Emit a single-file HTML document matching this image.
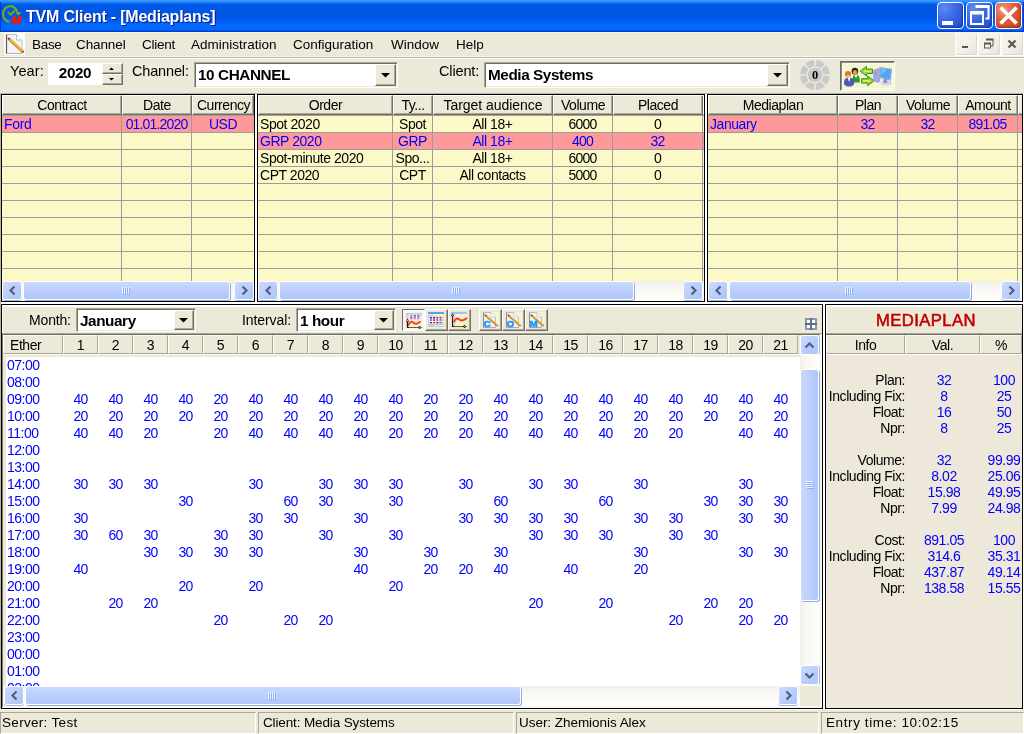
<!DOCTYPE html><html><head><meta charset="utf-8"><title>TVM Client - [Mediaplans]</title><style>
html,body{margin:0;padding:0;}
body{width:1024px;height:734px;overflow:hidden;background:#ECE9D8;font-family:"Liberation Sans",sans-serif;font-size:14px;letter-spacing:-0.45px;color:#000;position:relative;}
div,svg{position:absolute;box-sizing:border-box;}
svg{overflow:visible;}
.t{white-space:nowrap;overflow:hidden;}
.c{text-align:center;}
.r{text-align:right;}
.b{font-weight:bold;}
.bl{color:#0000FF;}
.n{letter-spacing:-0.8px;}
.hd{background:#ECE9D8;border-top:1px solid #fff;border-left:1px solid #fff;border-right:1px solid #716F64;border-bottom:1px solid #716F64;box-shadow:inset -1px -1px 0 #ACA899;text-align:center;white-space:nowrap;overflow:hidden;font-size:14px;}
.hf{background:#ECE9D8;border-top:1px solid #F8F7F1;border-left:1px solid #fff;border-right:1px solid #ACA899;border-bottom:1px solid #ACA899;text-align:center;white-space:nowrap;overflow:hidden;font-size:14px;}
.sunk{border-top:1px solid #ACA899;border-left:1px solid #ACA899;border-right:1px solid #fff;border-bottom:1px solid #fff;}
.sunk2{border:1px solid;border-color:#ACA899 #fff #fff #ACA899;box-shadow:inset 1px 1px 0 #716F64, inset -1px -1px 0 #ECE9D8;background:#fff;}
.btn{background:#ECE9D8;border:1px solid;border-color:#fff #716F64 #716F64 #fff;box-shadow:inset -1px -1px 0 #ACA899;}
.sbtn{border:1px solid #fff;border-radius:3px;background:linear-gradient(135deg,#CBDBFD 0%,#BACDFB 55%,#AEC4F8 100%);box-shadow:0 1px 0 #9DB5EA;}
.sbtnv{border:1px solid #fff;border-radius:3px;background:linear-gradient(135deg,#CBDBFD 0%,#BACDFB 55%,#AEC4F8 100%);box-shadow:1px 0 0 #9DB5EA;}
.sthumbh{border:1px solid #fff;border-radius:3px;background:linear-gradient(to bottom,#C9D9FD 0%,#BCCFFB 50%,#B1C6F9 100%);box-shadow:1px 1px 0 #8FAAE6;}
.sthumbv{border:1px solid #fff;border-radius:3px;background:linear-gradient(to right,#C9D9FD 0%,#BCCFFB 50%,#B1C6F9 100%);box-shadow:1px 1px 0 #8FAAE6;}
.strackh{background:linear-gradient(to bottom,#F1EFE8 0%,#F8F7F3 30%,#FEFEFB 100%);}
.strackv{background:linear-gradient(to right,#F1EFE8 0%,#F8F7F3 30%,#FEFEFB 100%);}
.cap{border:1px solid #fff;border-radius:4px;}
</style></head><body><div id="root" style="left:0;top:0;width:1024px;height:734px;will-change:transform;">
<div style="left:0px;top:0px;width:1024px;height:32px;background:linear-gradient(to bottom,#3D95FF 0px,#3D95FF 1px,#2B8AFF 2px,#0470FF 3px,#0262EE 4px,#0058E6 5px,#0055E5 17px,#005AF0 19px,#0062FA 23px,#0368FC 24px,#0368FC 30px,#0450E8 30px,#0450E8 31px,#003DD7 31px,#003DD7 32px);"></div>
<div style="left:0px;top:2px;width:1px;height:30px;background:#0A34CC;"></div>
<div style="left:1023px;top:2px;width:1px;height:30px;background:#0A34CC;"></div>
<svg style="left:1px;top:3px" width="24" height="24" viewBox="0 0 24 24"><path d="M16.400 10.300A7.200 7.900 0 1 0 8.300 18.800" fill="none" stroke="#6BA91E" stroke-width="2.200"/>
<path d="M14.400 9.300h6.200l-3.100 3.400z" fill="#6BA91E"/>
<path d="M7.100 8.800l2.600 3 4.100-4.300" fill="none" stroke="#6BA91E" stroke-width="2"/>
<text x="10.200" y="21" font-family="Liberation Sans,sans-serif" font-weight="bold" font-style="italic" font-size="11" textLength="9.800" lengthAdjust="spacingAndGlyphs" fill="#E3200C" stroke="#E3200C" stroke-width="0.700">M</text></svg>
<div class="t b" style="left:26px;top:3px;width:300px;height:27px;line-height:27px;color:#fff;font-size:16px;text-shadow:1px 1px 0 #0A1883;letter-spacing:-0.21px;">TVM Client - [Mediaplans]</div>
<div class="cap" style="left:937px;top:2px;width:27px;height:27px;background:radial-gradient(circle at 25% 20%,#5C8AF4 0%,#3A68E4 45%,#2048D0 100%);box-shadow:inset -1px -1px 2px rgba(0,0,40,0.35);"></div>
<div class="cap" style="left:966px;top:2px;width:27px;height:27px;background:radial-gradient(circle at 25% 20%,#5C8AF4 0%,#3A68E4 45%,#2048D0 100%);box-shadow:inset -1px -1px 2px rgba(0,0,40,0.35);"></div>
<div class="cap" style="left:995px;top:2px;width:27px;height:27px;background:radial-gradient(circle at 30% 25%,#F09A7C 0%,#E2593A 45%,#C9401C 100%);box-shadow:inset -1px -1px 2px rgba(0,0,40,0.35);"></div>
<div style="left:942px;top:21px;width:11px;height:4px;background:#fff;"></div>
<svg style="left:966px;top:2px" width="27" height="27" viewBox="0 0 27 27"><path d="M10.5 4.5h12v12h-3" fill="none" stroke="#fff" stroke-width="2"/><rect x="9.5" y="3" width="14" height="3" fill="#fff"/>
<rect x="5" y="11" width="12" height="11" fill="none" stroke="#fff" stroke-width="2"/><rect x="4" y="9" width="14" height="3.5" fill="#fff"/></svg>
<svg style="left:995px;top:2px" width="27" height="27" viewBox="0 0 27 27"><path d="M5.5 5.5l16 16M21.5 5.5l-16 16" stroke="#fff" stroke-width="3.6" fill="none"/></svg>
<div style="left:0px;top:32px;width:1024px;height:1px;background:#FCF5DD;"></div>
<div style="left:0px;top:56px;width:1024px;height:1px;background:#F6F5EE;"></div>
<div style="left:0px;top:57px;width:1024px;height:1px;background:#B9B6A6;"></div>
<div style="left:0px;top:58px;width:1024px;height:1px;background:#fff;"></div>
<div style="left:4px;top:33px;width:21px;height:22px;background:#fff;"></div>
<svg style="left:4px;top:33px" width="21" height="22" viewBox="0 0 21 22"><path d="M2.500 1.500h10l5.500 5.500v13.500h-15.500z" fill="#F3F3F6" stroke="#C0C0C8" stroke-width="1"/>
<path d="M2.500 1.500v19" stroke="#5A5A5A" stroke-width="1.200"/><path d="M3 20.500h15" stroke="#B0B0B8" stroke-width="1"/>
<path d="M12.500 1.500v5.500h5.500" fill="#fff" stroke="#C0C0C8" stroke-width="1"/>
<path d="M5 6l13.500 12.500" stroke="#C88408" stroke-width="2.800" stroke-linecap="round"/>
<path d="M5.400 6l13 12" stroke="#F6C030" stroke-width="1.500"/>
<path d="M3.400 4.400l3 0.900-1.400 1.700z" fill="#4A4A50"/>
<circle cx="18.800" cy="18.800" r="1.400" fill="#D86850"/></svg>
<div class="t" style="left:32px;top:34px;width:120px;height:21px;line-height:21px;font-size:13.5px;letter-spacing:-0.3px;">Base</div>
<div class="t" style="left:76px;top:34px;width:120px;height:21px;line-height:21px;font-size:13.5px;letter-spacing:-0.1px;">Channel</div>
<div class="t" style="left:142px;top:34px;width:120px;height:21px;line-height:21px;font-size:13.5px;letter-spacing:-0.25px;">Client</div>
<div class="t" style="left:191px;top:34px;width:120px;height:21px;line-height:21px;font-size:13.5px;letter-spacing:0px;">Administration</div>
<div class="t" style="left:293px;top:34px;width:120px;height:21px;line-height:21px;font-size:13.5px;letter-spacing:0px;">Configuration</div>
<div class="t" style="left:391px;top:34px;width:120px;height:21px;line-height:21px;font-size:13.5px;letter-spacing:0px;">Window</div>
<div class="t" style="left:456px;top:34px;width:120px;height:21px;line-height:21px;font-size:13.5px;letter-spacing:0px;">Help</div>
<div style="left:955px;top:33px;width:69px;height:23px;background:#FDFDFB;"></div>
<div style="left:956px;top:33px;width:21px;height:22px;background:linear-gradient(135deg,#F6F5EF 0%,#F1F0E8 60%,#E4E2D6 100%);border-radius:2px;box-shadow:inset -1px -1px 0 #DCD9CC;"></div>
<div style="left:979px;top:33px;width:21px;height:22px;background:linear-gradient(135deg,#F6F5EF 0%,#F1F0E8 60%,#E4E2D6 100%);border-radius:2px;box-shadow:inset -1px -1px 0 #DCD9CC;"></div>
<div style="left:1002px;top:33px;width:21px;height:22px;background:linear-gradient(135deg,#F6F5EF 0%,#F1F0E8 60%,#E4E2D6 100%);border-radius:2px;box-shadow:inset -1px -1px 0 #DCD9CC;"></div>
<div style="left:962px;top:46px;width:6px;height:2px;background:#5A584D;"></div>
<svg style="left:979px;top:33px" width="21" height="22" viewBox="0 0 21 22"><path d="M7.5 6.5h6.5v6.5h-2" fill="none" stroke="#5A584D" stroke-width="1"/><rect x="7" y="5.5" width="7.5" height="2" fill="#5A584D"/><rect x="5.5" y="10.5" width="6" height="4.5" fill="none" stroke="#5A584D" stroke-width="1"/><rect x="5" y="9.5" width="7" height="2" fill="#5A584D"/></svg>
<svg style="left:1002px;top:33px" width="21" height="22" viewBox="0 0 21 22"><path d="M6.5 7.5l7 7M13.5 7.5l-7 7" stroke="#5A584D" stroke-width="2.2" fill="none"/></svg>
<div class="t" style="left:10px;top:60px;width:40px;height:22px;line-height:22px;font-size:14.5px;letter-spacing:0.09px;">Year:</div>
<div style="left:48px;top:63px;width:54px;height:22px;background:#fff;"></div>
<div class="t b c" style="left:48px;top:62px;width:54px;height:22px;line-height:22px;font-size:15.3px;letter-spacing:-0.42px;">2020</div>
<div class="btn" style="left:102px;top:63px;width:21px;height:11px;"></div>
<div class="btn" style="left:102px;top:74px;width:21px;height:11px;"></div>
<svg style="left:109px;top:67px" width="5" height="3" viewBox="0 0 5 3"><path d="M0 3h5L2.5 0.5z" fill="#000"/></svg>
<svg style="left:109px;top:78px" width="5" height="3" viewBox="0 0 5 3"><path d="M0 0h5L2.5 2.5z" fill="#000"/></svg>
<div class="t" style="left:132px;top:60px;width:60px;height:22px;line-height:22px;font-size:14.5px;letter-spacing:-0.16px;">Channel:</div>
<div class="sunk2" style="left:194px;top:62px;width:204px;height:26px;"></div>
<div class="t b" style="left:198px;top:64px;width:177px;height:22px;line-height:22px;font-size:15.3px;letter-spacing:-0.42px;">10 CHANNEL</div>
<div class="btn" style="left:375px;top:64px;width:21px;height:22px;"></div>
<svg style="left:381px;top:73px" width="9" height="5" viewBox="0 0 9 5"><path d="M0 0h9L4.5 4.5z" fill="#000"/></svg>
<div class="t" style="left:439px;top:60px;width:50px;height:22px;line-height:22px;font-size:14.5px;letter-spacing:-0.15px;">Client:</div>
<div class="sunk2" style="left:484px;top:62px;width:306px;height:26px;"></div>
<div class="t b" style="left:488px;top:64px;width:279px;height:22px;line-height:22px;font-size:15.3px;letter-spacing:-0.42px;">Media Systems</div>
<div class="btn" style="left:767px;top:64px;width:21px;height:22px;"></div>
<svg style="left:773px;top:73px" width="9" height="5" viewBox="0 0 9 5"><path d="M0 0h9L4.5 4.5z" fill="#000"/></svg>
<svg style="left:799px;top:59px" width="32" height="32" viewBox="-16 -16 32 32"><path d="M1.05 -14.96A15 15 0 0 1 9.84 -11.32L5.64 -6.49A8.6 8.6 0 0 0 0.60 -8.58z" fill="#C9C9C9"/><path d="M11.32 -9.84A15 15 0 0 1 14.96 -1.05L8.58 -0.60A8.6 8.6 0 0 0 6.49 -5.64z" fill="#C9C9C9"/><path d="M14.96 1.05A15 15 0 0 1 11.32 9.84L6.49 5.64A8.6 8.6 0 0 0 8.58 0.60z" fill="#C9C9C9"/><path d="M9.84 11.32A15 15 0 0 1 1.05 14.96L0.60 8.58A8.6 8.6 0 0 0 5.64 6.49z" fill="#C9C9C9"/><path d="M-1.05 14.96A15 15 0 0 1 -9.84 11.32L-5.64 6.49A8.6 8.6 0 0 0 -0.60 8.58z" fill="#C9C9C9"/><path d="M-11.32 9.84A15 15 0 0 1 -14.96 1.05L-8.58 0.60A8.6 8.6 0 0 0 -6.49 5.64z" fill="#C9C9C9"/><path d="M-14.96 -1.05A15 15 0 0 1 -11.32 -9.84L-6.49 -5.64A8.6 8.6 0 0 0 -8.58 -0.60z" fill="#C9C9C9"/><path d="M-9.84 -11.32A15 15 0 0 1 -1.05 -14.96L-0.60 -8.58A8.6 8.6 0 0 0 -5.64 -6.49z" fill="#C9C9C9"/><circle cx="0" cy="0" r="7.3" fill="#C9C9C9"/><text x="0" y="4.2" text-anchor="middle" font-family="Liberation Serif,serif" font-weight="bold" font-size="12.5" fill="#000">0</text></svg>
<div style="left:840px;top:61px;width:55px;height:30px;border:1px solid;border-color:#716F64 #fff #fff #716F64;background:#F5F5D4;box-shadow:inset 1px 1px 0 #8E8B7C;"></div>
<div style="left:842px;top:63px;width:51px;height:26px;border:1px dotted #fff;"></div>
<svg style="left:842px;top:63px" width="51" height="26" viewBox="0 0 51 26">
<ellipse cx="12.900" cy="8.200" rx="3.300" ry="3.400" fill="#33241A"/><ellipse cx="13" cy="9.300" rx="2.100" ry="2.400" fill="#E8A030"/>
<path d="M10.400 19.400c-0.300-5.500 0.800-7.600 3.600-7.600s4 2.100 3.700 7.600z" fill="#2E9A2E"/><path d="M12.500 12l1.500 3.400 1.500-3.400z" fill="#fff"/>
<ellipse cx="6" cy="11.300" rx="3" ry="3.300" fill="#E07818"/><ellipse cx="6.200" cy="12.700" rx="2" ry="2.300" fill="#F4C890"/>
<ellipse cx="6.100" cy="11" rx="2.600" ry="1.600" fill="#E86020" opacity="0.700"/>
<path d="M2 21c-0.300-4.500 1.500-6.600 5-6.600s5.400 2.100 5.100 6.600c-1.500 3.400-8.500 3.400-10.100 0z" fill="#5058B8"/><path d="M5.600 14.500l1.500 4.600 1.500-4.600z" fill="#fff"/>
<path d="M18.200 8.200l6.300-4.800v2.700h6v4.400h-6v2.600z" fill="#8ED82E" stroke="#2E9A1E" stroke-width="1"/><path d="M22 8.300h7.500" stroke="#F4E060" stroke-width="1.800"/>
<path d="M32 17.800l-6.300-4.800v2.700h-6v4.400h6v2.600z" fill="#8ED82E" stroke="#2E9A1E" stroke-width="1"/><path d="M20.800 17.900h7.500" stroke="#F4E060" stroke-width="1.800"/>
<path d="M31.600 7.600l4.500-2 1.700 0.800v11.800l-1.700 1.300-4.500-1.800z" fill="#A6A8E0" stroke="#8E90D0" stroke-width="0.600"/>
<path d="M33 9.500l2 -0.500M33 11.500l2 -0.300" stroke="#7A7CC0" stroke-width="0.600"/>
<path d="M38 4.600l11.400 1.600-1 10.800-10.400-2.400z" fill="#48A8F0" stroke="#A6A8E0" stroke-width="1.300"/>
<path d="M39.500 6l5 0.700-5 5z" fill="#7CC4F8"/>
<ellipse cx="44" cy="20" rx="5.600" ry="2.500" fill="#D0D0F0"/><path d="M41.500 15.800h3.600v4h-3.600z" fill="#8A8CCC"/>
</svg>
<div style="left:0px;top:93px;width:1024px;height:1px;background:#B8B4A0;"></div>
<div style="left:0px;top:93px;width:1px;height:617px;background:#B8B4A0;"></div>
<div style="left:1px;top:94px;width:254px;height:208px;background:#FBF9C8;border:1px solid #000;"></div>
<div style="left:2px;top:116px;width:252px;height:16px;background:#FF9999;"></div>
<div style="left:2px;top:115px;width:252px;height:1px;background:#A39F92;"></div>
<div style="left:2px;top:132px;width:252px;height:1px;background:#9C9C9C;"></div>
<div style="left:2px;top:149px;width:252px;height:1px;background:#9C9C9C;"></div>
<div style="left:2px;top:166px;width:252px;height:1px;background:#9C9C9C;"></div>
<div style="left:2px;top:183px;width:252px;height:1px;background:#9C9C9C;"></div>
<div style="left:2px;top:200px;width:252px;height:1px;background:#9C9C9C;"></div>
<div style="left:2px;top:217px;width:252px;height:1px;background:#9C9C9C;"></div>
<div style="left:2px;top:234px;width:252px;height:1px;background:#9C9C9C;"></div>
<div style="left:2px;top:251px;width:252px;height:1px;background:#9C9C9C;"></div>
<div style="left:2px;top:268px;width:252px;height:1px;background:#9C9C9C;"></div>
<div class="hd" style="left:2px;top:95px;width:120px;height:20px;line-height:18px;">Contract</div>
<div style="left:121px;top:115px;width:1px;height:166px;background:#9C9C9C;"></div>
<div class="hd" style="left:122px;top:95px;width:70px;height:20px;line-height:18px;">Date</div>
<div style="left:191px;top:115px;width:1px;height:166px;background:#9C9C9C;"></div>
<div class="hd" style="left:192px;top:95px;width:62px;height:20px;line-height:18px;padding-left:1px;">Currency</div>
<div class="t" style="left:2px;top:116px;width:119px;height:17px;line-height:17px;color:#0000FF;padding-left:2px;letter-spacing:-0.3px;">Ford</div>
<div class="t c" style="left:122px;top:116px;width:69px;height:17px;line-height:17px;color:#0000FF;letter-spacing:-0.84px;">01.01.2020</div>
<div class="t c" style="left:192px;top:116px;width:62px;height:17px;line-height:17px;color:#0000FF;">USD</div>
<div class="strackh" style="left:2px;top:281px;width:252px;height:20px;"></div>
<div class="sbtn" style="left:2px;top:281px;width:20px;height:19px;"></div>
<svg style="left:0;top:0" width="1" height="1"><path d="M14.5 286.5L10.5 290.5L14.5 294.5" fill="none" stroke="#4D6185" stroke-width="2.2"/></svg>
<div class="sbtn" style="left:234px;top:281px;width:20px;height:19px;"></div>
<svg style="left:0;top:0" width="1" height="1"><path d="M242.5 286.5L246.5 290.5L242.5 294.5" fill="none" stroke="#4D6185" stroke-width="2.2"/></svg>
<div class="sthumbh" style="left:23px;top:281px;width:207px;height:19px;"></div>
<div style="left:122px;top:287px;width:1px;height:7px;background:#EEF4FE;"></div>
<div style="left:123px;top:288px;width:1px;height:7px;background:#8CB0F8;"></div>
<div style="left:124px;top:287px;width:1px;height:7px;background:#EEF4FE;"></div>
<div style="left:125px;top:288px;width:1px;height:7px;background:#8CB0F8;"></div>
<div style="left:126px;top:287px;width:1px;height:7px;background:#EEF4FE;"></div>
<div style="left:127px;top:288px;width:1px;height:7px;background:#8CB0F8;"></div>
<div style="left:128px;top:287px;width:1px;height:7px;background:#EEF4FE;"></div>
<div style="left:129px;top:288px;width:1px;height:7px;background:#8CB0F8;"></div>
<div style="left:257px;top:94px;width:448px;height:208px;background:#FBF9C8;border:1px solid #000;"></div>
<div style="left:258px;top:133px;width:446px;height:16px;background:#FF9999;"></div>
<div style="left:258px;top:115px;width:446px;height:1px;background:#A39F92;"></div>
<div style="left:258px;top:132px;width:446px;height:1px;background:#9C9C9C;"></div>
<div style="left:258px;top:149px;width:446px;height:1px;background:#9C9C9C;"></div>
<div style="left:258px;top:166px;width:446px;height:1px;background:#9C9C9C;"></div>
<div style="left:258px;top:183px;width:446px;height:1px;background:#9C9C9C;"></div>
<div style="left:258px;top:200px;width:446px;height:1px;background:#9C9C9C;"></div>
<div style="left:258px;top:217px;width:446px;height:1px;background:#9C9C9C;"></div>
<div style="left:258px;top:234px;width:446px;height:1px;background:#9C9C9C;"></div>
<div style="left:258px;top:251px;width:446px;height:1px;background:#9C9C9C;"></div>
<div style="left:258px;top:268px;width:446px;height:1px;background:#9C9C9C;"></div>
<div class="hd" style="left:258px;top:95px;width:135px;height:20px;line-height:18px;">Order</div>
<div style="left:392px;top:115px;width:1px;height:166px;background:#9C9C9C;"></div>
<div class="hd" style="left:393px;top:95px;width:40px;height:20px;line-height:18px;">Ty...</div>
<div style="left:432px;top:115px;width:1px;height:166px;background:#9C9C9C;"></div>
<div class="hd" style="left:433px;top:95px;width:120px;height:20px;line-height:18px;letter-spacing:-0.04px;">Target audience</div>
<div style="left:552px;top:115px;width:1px;height:166px;background:#9C9C9C;"></div>
<div class="hd" style="left:553px;top:95px;width:60px;height:20px;line-height:18px;">Volume</div>
<div style="left:612px;top:115px;width:1px;height:166px;background:#9C9C9C;"></div>
<div class="hd" style="left:613px;top:95px;width:90px;height:20px;line-height:18px;">Placed</div>
<div style="left:702px;top:115px;width:1px;height:166px;background:#9C9C9C;"></div>
<div class="hd" style="left:703px;top:95px;width:1px;height:20px;border-right:0;box-shadow:inset 0 -1px 0 #ACA899;"></div>
<div class="t" style="left:258px;top:116px;width:134px;height:17px;line-height:17px;padding-left:2px;">Spot 2020</div>
<div class="t c" style="left:393px;top:116px;width:39px;height:17px;line-height:17px;">Spot</div>
<div class="t c" style="left:433px;top:116px;width:119px;height:17px;line-height:17px;">All 18+</div>
<div class="t c" style="left:553px;top:116px;width:59px;height:17px;line-height:17px;letter-spacing:-0.8px;">6000</div>
<div class="t c" style="left:613px;top:116px;width:89px;height:17px;line-height:17px;letter-spacing:-0.8px;">0</div>
<div class="t" style="left:258px;top:133px;width:134px;height:17px;line-height:17px;color:#0000FF;padding-left:2px;">GRP 2020</div>
<div class="t c" style="left:393px;top:133px;width:39px;height:17px;line-height:17px;color:#0000FF;">GRP</div>
<div class="t c" style="left:433px;top:133px;width:119px;height:17px;line-height:17px;color:#0000FF;">All 18+</div>
<div class="t c" style="left:553px;top:133px;width:59px;height:17px;line-height:17px;color:#0000FF;letter-spacing:-0.8px;">400</div>
<div class="t c" style="left:613px;top:133px;width:89px;height:17px;line-height:17px;color:#0000FF;letter-spacing:-0.8px;">32</div>
<div class="t" style="left:258px;top:150px;width:134px;height:17px;line-height:17px;padding-left:2px;">Spot-minute 2020</div>
<div class="t c" style="left:393px;top:150px;width:39px;height:17px;line-height:17px;">Spo...</div>
<div class="t c" style="left:433px;top:150px;width:119px;height:17px;line-height:17px;">All 18+</div>
<div class="t c" style="left:553px;top:150px;width:59px;height:17px;line-height:17px;letter-spacing:-0.8px;">6000</div>
<div class="t c" style="left:613px;top:150px;width:89px;height:17px;line-height:17px;letter-spacing:-0.8px;">0</div>
<div class="t" style="left:258px;top:167px;width:134px;height:17px;line-height:17px;padding-left:2px;">CPT 2020</div>
<div class="t c" style="left:393px;top:167px;width:39px;height:17px;line-height:17px;">CPT</div>
<div class="t c" style="left:433px;top:167px;width:119px;height:17px;line-height:17px;">All contacts</div>
<div class="t c" style="left:553px;top:167px;width:59px;height:17px;line-height:17px;letter-spacing:-0.8px;">5000</div>
<div class="t c" style="left:613px;top:167px;width:89px;height:17px;line-height:17px;letter-spacing:-0.8px;">0</div>
<div class="strackh" style="left:258px;top:281px;width:446px;height:20px;"></div>
<div class="sbtn" style="left:258px;top:281px;width:20px;height:19px;"></div>
<svg style="left:0;top:0" width="1" height="1"><path d="M270.5 286.5L266.5 290.5L270.5 294.5" fill="none" stroke="#4D6185" stroke-width="2.2"/></svg>
<div class="sbtn" style="left:683px;top:281px;width:20px;height:19px;"></div>
<svg style="left:0;top:0" width="1" height="1"><path d="M691.5 286.5L695.5 290.5L691.5 294.5" fill="none" stroke="#4D6185" stroke-width="2.2"/></svg>
<div class="sthumbh" style="left:279px;top:281px;width:355px;height:19px;"></div>
<div style="left:452px;top:287px;width:1px;height:7px;background:#EEF4FE;"></div>
<div style="left:453px;top:288px;width:1px;height:7px;background:#8CB0F8;"></div>
<div style="left:454px;top:287px;width:1px;height:7px;background:#EEF4FE;"></div>
<div style="left:455px;top:288px;width:1px;height:7px;background:#8CB0F8;"></div>
<div style="left:456px;top:287px;width:1px;height:7px;background:#EEF4FE;"></div>
<div style="left:457px;top:288px;width:1px;height:7px;background:#8CB0F8;"></div>
<div style="left:458px;top:287px;width:1px;height:7px;background:#EEF4FE;"></div>
<div style="left:459px;top:288px;width:1px;height:7px;background:#8CB0F8;"></div>
<div style="left:707px;top:94px;width:316px;height:208px;background:#FBF9C8;border:1px solid #000;"></div>
<div style="left:708px;top:116px;width:314px;height:16px;background:#FF9999;"></div>
<div style="left:708px;top:115px;width:314px;height:1px;background:#A39F92;"></div>
<div style="left:708px;top:132px;width:314px;height:1px;background:#9C9C9C;"></div>
<div style="left:708px;top:149px;width:314px;height:1px;background:#9C9C9C;"></div>
<div style="left:708px;top:166px;width:314px;height:1px;background:#9C9C9C;"></div>
<div style="left:708px;top:183px;width:314px;height:1px;background:#9C9C9C;"></div>
<div style="left:708px;top:200px;width:314px;height:1px;background:#9C9C9C;"></div>
<div style="left:708px;top:217px;width:314px;height:1px;background:#9C9C9C;"></div>
<div style="left:708px;top:234px;width:314px;height:1px;background:#9C9C9C;"></div>
<div style="left:708px;top:251px;width:314px;height:1px;background:#9C9C9C;"></div>
<div style="left:708px;top:268px;width:314px;height:1px;background:#9C9C9C;"></div>
<div class="hd" style="left:708px;top:95px;width:130px;height:20px;line-height:18px;">Mediaplan</div>
<div style="left:837px;top:115px;width:1px;height:166px;background:#9C9C9C;"></div>
<div class="hd" style="left:838px;top:95px;width:60px;height:20px;line-height:18px;">Plan</div>
<div style="left:897px;top:115px;width:1px;height:166px;background:#9C9C9C;"></div>
<div class="hd" style="left:898px;top:95px;width:60px;height:20px;line-height:18px;">Volume</div>
<div style="left:957px;top:115px;width:1px;height:166px;background:#9C9C9C;"></div>
<div class="hd" style="left:958px;top:95px;width:60px;height:20px;line-height:18px;">Amount</div>
<div style="left:1017px;top:115px;width:1px;height:166px;background:#9C9C9C;"></div>
<div class="hd" style="left:1018px;top:95px;width:4px;height:20px;border-right:0;box-shadow:inset 0 -1px 0 #ACA899;"></div>
<div class="t" style="left:708px;top:116px;width:129px;height:17px;line-height:17px;color:#0000FF;padding-left:2px;">January</div>
<div class="t c" style="left:838px;top:116px;width:59px;height:17px;line-height:17px;color:#0000FF;letter-spacing:-0.8px;">32</div>
<div class="t c" style="left:898px;top:116px;width:59px;height:17px;line-height:17px;color:#0000FF;letter-spacing:-0.8px;">32</div>
<div class="t c" style="left:958px;top:116px;width:59px;height:17px;line-height:17px;color:#0000FF;letter-spacing:-0.8px;">891.05</div>
<div class="strackh" style="left:708px;top:281px;width:314px;height:20px;"></div>
<div class="sbtn" style="left:708px;top:281px;width:20px;height:19px;"></div>
<svg style="left:0;top:0" width="1" height="1"><path d="M720.5 286.5L716.5 290.5L720.5 294.5" fill="none" stroke="#4D6185" stroke-width="2.2"/></svg>
<div class="sbtn" style="left:1001px;top:281px;width:20px;height:19px;"></div>
<svg style="left:0;top:0" width="1" height="1"><path d="M1009.5 286.5L1013.5 290.5L1009.5 294.5" fill="none" stroke="#4D6185" stroke-width="2.2"/></svg>
<div class="sthumbh" style="left:729px;top:281px;width:242px;height:19px;"></div>
<div style="left:845px;top:287px;width:1px;height:7px;background:#EEF4FE;"></div>
<div style="left:846px;top:288px;width:1px;height:7px;background:#8CB0F8;"></div>
<div style="left:847px;top:287px;width:1px;height:7px;background:#EEF4FE;"></div>
<div style="left:848px;top:288px;width:1px;height:7px;background:#8CB0F8;"></div>
<div style="left:849px;top:287px;width:1px;height:7px;background:#EEF4FE;"></div>
<div style="left:850px;top:288px;width:1px;height:7px;background:#8CB0F8;"></div>
<div style="left:851px;top:287px;width:1px;height:7px;background:#EEF4FE;"></div>
<div style="left:852px;top:288px;width:1px;height:7px;background:#8CB0F8;"></div>
<div style="left:1023px;top:93px;width:1px;height:617px;background:#fff;"></div>
<div style="left:255px;top:94px;width:2px;height:208px;background:#fff;"></div>
<div style="left:705px;top:94px;width:2px;height:208px;background:#fff;"></div>
<div style="left:1px;top:302px;width:1022px;height:2px;background:#fff;"></div>
<div style="left:1px;top:304px;width:822px;height:405px;background:#ECE9D8;border:1px solid #000;"></div>
<div style="left:2px;top:305px;width:820px;height:2px;background:#fff;"></div>
<div style="left:2px;top:305px;width:1px;height:28px;background:#FDFBEE;"></div>
<div class="t" style="left:29px;top:309px;width:50px;height:22px;line-height:22px;font-size:14px;letter-spacing:-0.16px;">Month:</div>
<div class="sunk2" style="left:76px;top:308px;width:120px;height:24px;"></div>
<div class="t b" style="left:80px;top:310.5px;width:94px;height:20px;line-height:20px;font-size:15.3px;letter-spacing:-0.42px;">January</div>
<div class="btn" style="left:174px;top:310px;width:20px;height:20px;"></div>
<svg style="left:179px;top:318px" width="9" height="5" viewBox="0 0 9 5"><path d="M0 0h9L4.5 4.5z" fill="#000"/></svg>
<div class="t" style="left:242px;top:309px;width:56px;height:22px;line-height:22px;font-size:14px;letter-spacing:-0.08px;">Interval:</div>
<div class="sunk2" style="left:296px;top:308px;width:100px;height:24px;"></div>
<div class="t b" style="left:300px;top:310.5px;width:74px;height:20px;line-height:20px;font-size:15.3px;letter-spacing:-0.42px;">1 hour</div>
<div class="btn" style="left:374px;top:310px;width:20px;height:20px;"></div>
<svg style="left:379px;top:318px" width="9" height="5" viewBox="0 0 9 5"><path d="M0 0h9L4.5 4.5z" fill="#000"/></svg>
<div style="left:402px;top:309px;width:23px;height:22px;border:1px solid;border-color:#716F64 #fff #fff #716F64;background:#F6F4EC;"></div>
<div style="left:403px;top:310px;width:21px;height:20px;border:1px dotted #fff;"></div>
<div class="btn" style="left:425px;top:309px;width:23px;height:22px;"></div>
<div class="btn" style="left:448px;top:309px;width:23px;height:22px;"></div>
<div class="btn" style="left:479px;top:309px;width:23px;height:22px;"></div>
<div class="btn" style="left:502px;top:309px;width:23px;height:22px;"></div>
<div class="btn" style="left:525px;top:309px;width:23px;height:22px;"></div>
<svg style="left:406px;top:313px" width="16" height="16" viewBox="0 0 16 16"><rect x="0" y="0" width="16" height="2.500" fill="#9ED4FA"/><rect x="0" y="2.500" width="2.500" height="11.500" fill="#F6C4C8"/><rect x="2.500" y="7" width="13.500" height="8" fill="#F8F6C4"/><rect x="2.800" y="1.200" width="11.800" height="5.200" fill="#F6F6FC" stroke="#C4CCE4" stroke-width="0.500"/><rect x="4.20" y="2.3" width="2.2" height="1.3" rx="0.4" fill="#F01818"/><rect x="7.70" y="2.3" width="2.2" height="1.3" rx="0.4" fill="#1428C0"/><rect x="11.20" y="2.3" width="2.2" height="1.3" rx="0.4" fill="#1428C0"/><rect x="4.20" y="4.3" width="2.2" height="1.3" rx="0.4" fill="#1428C0"/><rect x="7.70" y="4.3" width="2.2" height="1.3" rx="0.4" fill="#F01818"/><rect x="11.20" y="4.3" width="2.2" height="1.3" rx="0.4" fill="#F01818"/><path d="M2.200 12.200c1.800-3.400 3.400-4.200 5.200-2.600s3.600 2 6.600-0.800" fill="none" stroke="#F8A8A0" stroke-width="2.600" stroke-linecap="round"/><path d="M2.200 12.200c1.800-3.400 3.400-4.200 5.200-2.600s3.600 2 6.600-0.800" fill="none" stroke="#F03830" stroke-width="1.500" stroke-linecap="round"/><path d="M1.500 7v7.500h12.500" fill="none" stroke="#18182C" stroke-width="1.100"/><path d="M3 14.500h9" stroke="#8A7C30" stroke-width="0.700"/><path d="M0 8.500l1.500-3 1.500 3z" fill="#101020"/><circle cx="1.500" cy="7.600" r="0.550" fill="#fff"/><path d="M12.800 12.800l3.200 1.700-3.200 1.700z" fill="#101020"/><circle cx="13.800" cy="14.500" r="0.550" fill="#fff"/></svg>
<svg style="left:428px;top:312px" width="16" height="16" viewBox="0 0 16 16"><rect x="0" y="0" width="16" height="16" fill="#F8F6C4"/><rect x="0" y="0" width="16" height="2" fill="#48A8F8"/><rect x="0" y="2.800" width="5.200" height="11" fill="#F8B8BC"/><rect x="0" y="13.800" width="16" height="1.400" fill="#9ED4FA"/><rect x="0" y="15.200" width="16" height="0.800" fill="#F4F4D8"/><rect x="1.200" y="4.600" width="14" height="8" fill="#A8A8B4"/><rect x="0.800" y="4.200" width="13.800" height="7.800" fill="#EEF0FA" stroke="#C4CCE4" stroke-width="0.400"/><rect x="1.80" y="5.1" width="2.2" height="1.3" rx="0.4" fill="#1428C0"/><rect x="5.00" y="5.1" width="2.2" height="1.3" rx="0.4" fill="#1428C0"/><rect x="8.20" y="5.1" width="2.2" height="1.3" rx="0.4" fill="#F01818"/><rect x="11.40" y="5.1" width="2.2" height="1.3" rx="0.4" fill="#F01818"/><rect x="2.00" y="7.1" width="1.8" height="2" rx="0.4" fill="#5878D8"/><rect x="5.20" y="7.1" width="1.8" height="2" rx="0.4" fill="#F01818"/><rect x="8.40" y="7.1" width="1.8" height="2" rx="0.4" fill="#5878D8"/><rect x="11.60" y="7.1" width="1.8" height="2" rx="0.4" fill="#5878D8"/><rect x="1.80" y="10" width="2.2" height="1.3" rx="0.4" fill="#1428C0"/><rect x="5.00" y="10" width="2.2" height="1.3" rx="0.4" fill="#F01818"/><rect x="8.20" y="10" width="2.2" height="1.3" rx="0.4" fill="#1428C0"/><rect x="11.40" y="10" width="2.2" height="1.3" rx="0.4" fill="#F01818"/></svg>
<svg style="left:451px;top:312px" width="16" height="16" viewBox="0 0 16 16"><rect x="0" y="0" width="16" height="2" fill="#8CCCFA"/><rect x="1" y="2" width="3.500" height="12" fill="#F6C4C8"/><rect x="4.500" y="2" width="11.500" height="12.800" fill="#F8F6C4"/><path d="M3 9.600c1.800-3.200 3.400-3.800 5.200-2.200s3.600 1.800 7.200-1" fill="none" stroke="#F8A8A0" stroke-width="2.600" stroke-linecap="round"/><path d="M3 9.600c1.800-3.200 3.400-3.800 5.200-2.200s3.600 1.800 7.200-1" fill="none" stroke="#F03830" stroke-width="1.500" stroke-linecap="round"/><path d="M1.500 2v12.500h13" fill="none" stroke="#18182C" stroke-width="1.100"/><path d="M3 14.500h9" stroke="#8A7C30" stroke-width="0.700"/><path d="M0 4l1.500-3 1.500 3z" fill="#101020"/><circle cx="1.500" cy="3.100" r="0.550" fill="#fff"/><path d="M12.800 12.800l3.200 1.700-3.200 1.700z" fill="#101020"/><circle cx="13.800" cy="14.500" r="0.550" fill="#fff"/></svg>
<div style="left:483px;top:312px;width:16px;height:16px;background:#F5F5D0;"></div>
<svg style="left:483px;top:312px" width="16" height="16" viewBox="0 0 16 16"><path d="M0.500 0.500h7.500l4.500 4.500v10.500h-12z" fill="#F0F0F5" stroke="#BCBCC8" stroke-width="1"/>
<path d="M0.500 0.500v15" stroke="#8A8A90" stroke-width="1"/><path d="M1 15.500h11.500" stroke="#A8A8B0" stroke-width="1"/><path d="M8 0.500v4.500h4.500" fill="#FCFCFE" stroke="#C4C4CC" stroke-width="0.800"/>
<path d="M2.600 3.600l11.400 9.800" stroke="#C88408" stroke-width="2" stroke-linecap="round"/><path d="M3 3.500l11 9.400" stroke="#F4B828" stroke-width="1"/>
<path d="M1.400 2.400l2.400 0.600-1.200 1.400z" fill="#4A4A50"/><circle cx="14.300" cy="13.600" r="1.100" fill="#C8A0A0"/>
<text x="0.800" y="14.800" font-family="Liberation Sans,sans-serif" font-weight="bold" font-size="9.500" fill="#1898FF" stroke="#1898FF" stroke-width="0.600">C</text></svg>
<div style="left:506px;top:312px;width:16px;height:16px;background:#F5F5D0;"></div>
<svg style="left:506px;top:312px" width="16" height="16" viewBox="0 0 16 16"><path d="M0.500 0.500h7.500l4.500 4.500v10.500h-12z" fill="#F0F0F5" stroke="#BCBCC8" stroke-width="1"/>
<path d="M0.500 0.500v15" stroke="#8A8A90" stroke-width="1"/><path d="M1 15.500h11.500" stroke="#A8A8B0" stroke-width="1"/><path d="M8 0.500v4.500h4.500" fill="#FCFCFE" stroke="#C4C4CC" stroke-width="0.800"/>
<path d="M2.600 3.600l11.400 9.800" stroke="#C88408" stroke-width="2" stroke-linecap="round"/><path d="M3 3.500l11 9.400" stroke="#F4B828" stroke-width="1"/>
<path d="M1.400 2.400l2.400 0.600-1.200 1.400z" fill="#4A4A50"/><circle cx="14.300" cy="13.600" r="1.100" fill="#C8A0A0"/>
<text x="0.800" y="14.800" font-family="Liberation Sans,sans-serif" font-weight="bold" font-size="9.500" fill="#1898FF" stroke="#1898FF" stroke-width="0.600">O</text></svg>
<div style="left:529px;top:312px;width:16px;height:16px;background:#F5F5D0;"></div>
<svg style="left:529px;top:312px" width="16" height="16" viewBox="0 0 16 16"><path d="M0.500 0.500h7.500l4.500 4.500v10.500h-12z" fill="#F0F0F5" stroke="#BCBCC8" stroke-width="1"/>
<path d="M0.500 0.500v15" stroke="#8A8A90" stroke-width="1"/><path d="M1 15.500h11.500" stroke="#A8A8B0" stroke-width="1"/><path d="M8 0.500v4.500h4.500" fill="#FCFCFE" stroke="#C4C4CC" stroke-width="0.800"/>
<path d="M2.600 3.600l11.400 9.800" stroke="#C88408" stroke-width="2" stroke-linecap="round"/><path d="M3 3.500l11 9.400" stroke="#F4B828" stroke-width="1"/>
<path d="M1.400 2.400l2.400 0.600-1.200 1.400z" fill="#4A4A50"/><circle cx="14.300" cy="13.600" r="1.100" fill="#C8A0A0"/>
<text x="0.800" y="14.800" font-family="Liberation Sans,sans-serif" font-weight="bold" font-size="9.500" fill="#1898FF" stroke="#1898FF" stroke-width="0.600">M</text></svg>
<div style="left:805px;top:318px;width:12px;height:12px;background:#8797B6;"></div>
<div style="left:807px;top:320px;width:3px;height:3px;background:#fff;"></div>
<div style="left:807px;top:325px;width:3px;height:3px;background:#fff;"></div>
<div style="left:812px;top:320px;width:3px;height:3px;background:#fff;"></div>
<div style="left:812px;top:325px;width:3px;height:3px;background:#fff;"></div>
<div style="left:810px;top:318px;width:2px;height:12px;background:#5F6C8C;"></div>
<div style="left:805px;top:323px;width:12px;height:2px;background:#5F6C8C;"></div>
<div style="left:2px;top:333px;width:820px;height:1px;background:#ACA899;"></div>
<div style="left:2px;top:334px;width:819px;height:1px;background:#716F64;"></div>
<div style="left:2px;top:334px;width:1px;height:373px;background:#7F7C6D;"></div>
<div style="left:820px;top:334px;width:2px;height:374px;background:#FAF8EE;"></div>
<div style="left:3px;top:706px;width:819px;height:2px;background:#F8F7F0;"></div>
<div style="left:3px;top:335px;width:797px;height:22px;background:#ECE9D8;"></div>
<div style="left:3px;top:357px;width:3px;height:329px;background:#ECE9D8;"></div>
<div style="left:6px;top:357px;width:794px;height:329px;background:#fff;"></div>
<div style="left:3px;top:354px;width:797px;height:1px;background:#FAF9F4;"></div>
<div class="hf" style="left:3px;top:335px;width:60px;height:19px;line-height:19px;text-align:left;padding-left:6px;">Ether</div>
<div class="hf" style="left:63px;top:335px;width:35px;height:19px;line-height:19px;">1</div>
<div class="hf" style="left:98px;top:335px;width:35px;height:19px;line-height:19px;">2</div>
<div class="hf" style="left:133px;top:335px;width:35px;height:19px;line-height:19px;">3</div>
<div class="hf" style="left:168px;top:335px;width:35px;height:19px;line-height:19px;">4</div>
<div class="hf" style="left:203px;top:335px;width:35px;height:19px;line-height:19px;">5</div>
<div class="hf" style="left:238px;top:335px;width:35px;height:19px;line-height:19px;">6</div>
<div class="hf" style="left:273px;top:335px;width:35px;height:19px;line-height:19px;">7</div>
<div class="hf" style="left:308px;top:335px;width:35px;height:19px;line-height:19px;">8</div>
<div class="hf" style="left:343px;top:335px;width:35px;height:19px;line-height:19px;">9</div>
<div class="hf" style="left:378px;top:335px;width:35px;height:19px;line-height:19px;">10</div>
<div class="hf" style="left:413px;top:335px;width:35px;height:19px;line-height:19px;">11</div>
<div class="hf" style="left:448px;top:335px;width:35px;height:19px;line-height:19px;">12</div>
<div class="hf" style="left:483px;top:335px;width:35px;height:19px;line-height:19px;">13</div>
<div class="hf" style="left:518px;top:335px;width:35px;height:19px;line-height:19px;">14</div>
<div class="hf" style="left:553px;top:335px;width:35px;height:19px;line-height:19px;">15</div>
<div class="hf" style="left:588px;top:335px;width:35px;height:19px;line-height:19px;">16</div>
<div class="hf" style="left:623px;top:335px;width:35px;height:19px;line-height:19px;">17</div>
<div class="hf" style="left:658px;top:335px;width:35px;height:19px;line-height:19px;">18</div>
<div class="hf" style="left:693px;top:335px;width:35px;height:19px;line-height:19px;">19</div>
<div class="hf" style="left:728px;top:335px;width:35px;height:19px;line-height:19px;">20</div>
<div class="hf" style="left:763px;top:335px;width:35px;height:19px;line-height:19px;">21</div>
<div style="left:0px;top:355px;width:800px;height:331px;overflow:hidden;">
<div class="t bl" style="left:7px;top:2px;width:50px;height:17px;line-height:17px;letter-spacing:-0.5px;">07:00</div>
<div class="t bl" style="left:7px;top:19px;width:50px;height:17px;line-height:17px;letter-spacing:-0.5px;">08:00</div>
<div class="t bl" style="left:7px;top:36px;width:50px;height:17px;line-height:17px;letter-spacing:-0.5px;">09:00</div>
<div class="t bl c n" style="left:63px;top:36px;width:35px;height:17px;line-height:17px;">40</div>
<div class="t bl c n" style="left:98px;top:36px;width:35px;height:17px;line-height:17px;">40</div>
<div class="t bl c n" style="left:133px;top:36px;width:35px;height:17px;line-height:17px;">40</div>
<div class="t bl c n" style="left:168px;top:36px;width:35px;height:17px;line-height:17px;">40</div>
<div class="t bl c n" style="left:203px;top:36px;width:35px;height:17px;line-height:17px;">20</div>
<div class="t bl c n" style="left:238px;top:36px;width:35px;height:17px;line-height:17px;">40</div>
<div class="t bl c n" style="left:273px;top:36px;width:35px;height:17px;line-height:17px;">40</div>
<div class="t bl c n" style="left:308px;top:36px;width:35px;height:17px;line-height:17px;">40</div>
<div class="t bl c n" style="left:343px;top:36px;width:35px;height:17px;line-height:17px;">40</div>
<div class="t bl c n" style="left:378px;top:36px;width:35px;height:17px;line-height:17px;">40</div>
<div class="t bl c n" style="left:413px;top:36px;width:35px;height:17px;line-height:17px;">20</div>
<div class="t bl c n" style="left:448px;top:36px;width:35px;height:17px;line-height:17px;">20</div>
<div class="t bl c n" style="left:483px;top:36px;width:35px;height:17px;line-height:17px;">40</div>
<div class="t bl c n" style="left:518px;top:36px;width:35px;height:17px;line-height:17px;">40</div>
<div class="t bl c n" style="left:553px;top:36px;width:35px;height:17px;line-height:17px;">40</div>
<div class="t bl c n" style="left:588px;top:36px;width:35px;height:17px;line-height:17px;">40</div>
<div class="t bl c n" style="left:623px;top:36px;width:35px;height:17px;line-height:17px;">40</div>
<div class="t bl c n" style="left:658px;top:36px;width:35px;height:17px;line-height:17px;">40</div>
<div class="t bl c n" style="left:693px;top:36px;width:35px;height:17px;line-height:17px;">40</div>
<div class="t bl c n" style="left:728px;top:36px;width:35px;height:17px;line-height:17px;">40</div>
<div class="t bl c n" style="left:763px;top:36px;width:35px;height:17px;line-height:17px;">40</div>
<div class="t bl" style="left:7px;top:53px;width:50px;height:17px;line-height:17px;letter-spacing:-0.5px;">10:00</div>
<div class="t bl c n" style="left:63px;top:53px;width:35px;height:17px;line-height:17px;">20</div>
<div class="t bl c n" style="left:98px;top:53px;width:35px;height:17px;line-height:17px;">20</div>
<div class="t bl c n" style="left:133px;top:53px;width:35px;height:17px;line-height:17px;">20</div>
<div class="t bl c n" style="left:168px;top:53px;width:35px;height:17px;line-height:17px;">20</div>
<div class="t bl c n" style="left:203px;top:53px;width:35px;height:17px;line-height:17px;">20</div>
<div class="t bl c n" style="left:238px;top:53px;width:35px;height:17px;line-height:17px;">20</div>
<div class="t bl c n" style="left:273px;top:53px;width:35px;height:17px;line-height:17px;">20</div>
<div class="t bl c n" style="left:308px;top:53px;width:35px;height:17px;line-height:17px;">20</div>
<div class="t bl c n" style="left:343px;top:53px;width:35px;height:17px;line-height:17px;">20</div>
<div class="t bl c n" style="left:378px;top:53px;width:35px;height:17px;line-height:17px;">20</div>
<div class="t bl c n" style="left:413px;top:53px;width:35px;height:17px;line-height:17px;">20</div>
<div class="t bl c n" style="left:448px;top:53px;width:35px;height:17px;line-height:17px;">20</div>
<div class="t bl c n" style="left:483px;top:53px;width:35px;height:17px;line-height:17px;">20</div>
<div class="t bl c n" style="left:518px;top:53px;width:35px;height:17px;line-height:17px;">20</div>
<div class="t bl c n" style="left:553px;top:53px;width:35px;height:17px;line-height:17px;">20</div>
<div class="t bl c n" style="left:588px;top:53px;width:35px;height:17px;line-height:17px;">20</div>
<div class="t bl c n" style="left:623px;top:53px;width:35px;height:17px;line-height:17px;">20</div>
<div class="t bl c n" style="left:658px;top:53px;width:35px;height:17px;line-height:17px;">20</div>
<div class="t bl c n" style="left:693px;top:53px;width:35px;height:17px;line-height:17px;">20</div>
<div class="t bl c n" style="left:728px;top:53px;width:35px;height:17px;line-height:17px;">20</div>
<div class="t bl c n" style="left:763px;top:53px;width:35px;height:17px;line-height:17px;">20</div>
<div class="t bl" style="left:7px;top:70px;width:50px;height:17px;line-height:17px;letter-spacing:-0.5px;">11:00</div>
<div class="t bl c n" style="left:63px;top:70px;width:35px;height:17px;line-height:17px;">40</div>
<div class="t bl c n" style="left:98px;top:70px;width:35px;height:17px;line-height:17px;">40</div>
<div class="t bl c n" style="left:133px;top:70px;width:35px;height:17px;line-height:17px;">20</div>
<div class="t bl c n" style="left:203px;top:70px;width:35px;height:17px;line-height:17px;">20</div>
<div class="t bl c n" style="left:238px;top:70px;width:35px;height:17px;line-height:17px;">40</div>
<div class="t bl c n" style="left:273px;top:70px;width:35px;height:17px;line-height:17px;">40</div>
<div class="t bl c n" style="left:308px;top:70px;width:35px;height:17px;line-height:17px;">40</div>
<div class="t bl c n" style="left:343px;top:70px;width:35px;height:17px;line-height:17px;">40</div>
<div class="t bl c n" style="left:378px;top:70px;width:35px;height:17px;line-height:17px;">20</div>
<div class="t bl c n" style="left:413px;top:70px;width:35px;height:17px;line-height:17px;">20</div>
<div class="t bl c n" style="left:448px;top:70px;width:35px;height:17px;line-height:17px;">20</div>
<div class="t bl c n" style="left:483px;top:70px;width:35px;height:17px;line-height:17px;">40</div>
<div class="t bl c n" style="left:518px;top:70px;width:35px;height:17px;line-height:17px;">40</div>
<div class="t bl c n" style="left:553px;top:70px;width:35px;height:17px;line-height:17px;">40</div>
<div class="t bl c n" style="left:588px;top:70px;width:35px;height:17px;line-height:17px;">40</div>
<div class="t bl c n" style="left:623px;top:70px;width:35px;height:17px;line-height:17px;">20</div>
<div class="t bl c n" style="left:658px;top:70px;width:35px;height:17px;line-height:17px;">20</div>
<div class="t bl c n" style="left:728px;top:70px;width:35px;height:17px;line-height:17px;">40</div>
<div class="t bl c n" style="left:763px;top:70px;width:35px;height:17px;line-height:17px;">40</div>
<div class="t bl" style="left:7px;top:87px;width:50px;height:17px;line-height:17px;letter-spacing:-0.5px;">12:00</div>
<div class="t bl" style="left:7px;top:104px;width:50px;height:17px;line-height:17px;letter-spacing:-0.5px;">13:00</div>
<div class="t bl" style="left:7px;top:121px;width:50px;height:17px;line-height:17px;letter-spacing:-0.5px;">14:00</div>
<div class="t bl c n" style="left:63px;top:121px;width:35px;height:17px;line-height:17px;">30</div>
<div class="t bl c n" style="left:98px;top:121px;width:35px;height:17px;line-height:17px;">30</div>
<div class="t bl c n" style="left:133px;top:121px;width:35px;height:17px;line-height:17px;">30</div>
<div class="t bl c n" style="left:238px;top:121px;width:35px;height:17px;line-height:17px;">30</div>
<div class="t bl c n" style="left:308px;top:121px;width:35px;height:17px;line-height:17px;">30</div>
<div class="t bl c n" style="left:343px;top:121px;width:35px;height:17px;line-height:17px;">30</div>
<div class="t bl c n" style="left:378px;top:121px;width:35px;height:17px;line-height:17px;">30</div>
<div class="t bl c n" style="left:448px;top:121px;width:35px;height:17px;line-height:17px;">30</div>
<div class="t bl c n" style="left:518px;top:121px;width:35px;height:17px;line-height:17px;">30</div>
<div class="t bl c n" style="left:553px;top:121px;width:35px;height:17px;line-height:17px;">30</div>
<div class="t bl c n" style="left:623px;top:121px;width:35px;height:17px;line-height:17px;">30</div>
<div class="t bl c n" style="left:728px;top:121px;width:35px;height:17px;line-height:17px;">30</div>
<div class="t bl" style="left:7px;top:138px;width:50px;height:17px;line-height:17px;letter-spacing:-0.5px;">15:00</div>
<div class="t bl c n" style="left:168px;top:138px;width:35px;height:17px;line-height:17px;">30</div>
<div class="t bl c n" style="left:273px;top:138px;width:35px;height:17px;line-height:17px;">60</div>
<div class="t bl c n" style="left:308px;top:138px;width:35px;height:17px;line-height:17px;">30</div>
<div class="t bl c n" style="left:378px;top:138px;width:35px;height:17px;line-height:17px;">30</div>
<div class="t bl c n" style="left:483px;top:138px;width:35px;height:17px;line-height:17px;">60</div>
<div class="t bl c n" style="left:588px;top:138px;width:35px;height:17px;line-height:17px;">60</div>
<div class="t bl c n" style="left:693px;top:138px;width:35px;height:17px;line-height:17px;">30</div>
<div class="t bl c n" style="left:728px;top:138px;width:35px;height:17px;line-height:17px;">30</div>
<div class="t bl c n" style="left:763px;top:138px;width:35px;height:17px;line-height:17px;">30</div>
<div class="t bl" style="left:7px;top:155px;width:50px;height:17px;line-height:17px;letter-spacing:-0.5px;">16:00</div>
<div class="t bl c n" style="left:63px;top:155px;width:35px;height:17px;line-height:17px;">30</div>
<div class="t bl c n" style="left:238px;top:155px;width:35px;height:17px;line-height:17px;">30</div>
<div class="t bl c n" style="left:273px;top:155px;width:35px;height:17px;line-height:17px;">30</div>
<div class="t bl c n" style="left:343px;top:155px;width:35px;height:17px;line-height:17px;">30</div>
<div class="t bl c n" style="left:448px;top:155px;width:35px;height:17px;line-height:17px;">30</div>
<div class="t bl c n" style="left:483px;top:155px;width:35px;height:17px;line-height:17px;">30</div>
<div class="t bl c n" style="left:518px;top:155px;width:35px;height:17px;line-height:17px;">30</div>
<div class="t bl c n" style="left:553px;top:155px;width:35px;height:17px;line-height:17px;">30</div>
<div class="t bl c n" style="left:623px;top:155px;width:35px;height:17px;line-height:17px;">30</div>
<div class="t bl c n" style="left:658px;top:155px;width:35px;height:17px;line-height:17px;">30</div>
<div class="t bl c n" style="left:728px;top:155px;width:35px;height:17px;line-height:17px;">30</div>
<div class="t bl c n" style="left:763px;top:155px;width:35px;height:17px;line-height:17px;">30</div>
<div class="t bl" style="left:7px;top:172px;width:50px;height:17px;line-height:17px;letter-spacing:-0.5px;">17:00</div>
<div class="t bl c n" style="left:63px;top:172px;width:35px;height:17px;line-height:17px;">30</div>
<div class="t bl c n" style="left:98px;top:172px;width:35px;height:17px;line-height:17px;">60</div>
<div class="t bl c n" style="left:133px;top:172px;width:35px;height:17px;line-height:17px;">30</div>
<div class="t bl c n" style="left:203px;top:172px;width:35px;height:17px;line-height:17px;">30</div>
<div class="t bl c n" style="left:238px;top:172px;width:35px;height:17px;line-height:17px;">30</div>
<div class="t bl c n" style="left:308px;top:172px;width:35px;height:17px;line-height:17px;">30</div>
<div class="t bl c n" style="left:378px;top:172px;width:35px;height:17px;line-height:17px;">30</div>
<div class="t bl c n" style="left:518px;top:172px;width:35px;height:17px;line-height:17px;">30</div>
<div class="t bl c n" style="left:553px;top:172px;width:35px;height:17px;line-height:17px;">30</div>
<div class="t bl c n" style="left:588px;top:172px;width:35px;height:17px;line-height:17px;">30</div>
<div class="t bl c n" style="left:658px;top:172px;width:35px;height:17px;line-height:17px;">30</div>
<div class="t bl c n" style="left:693px;top:172px;width:35px;height:17px;line-height:17px;">30</div>
<div class="t bl" style="left:7px;top:189px;width:50px;height:17px;line-height:17px;letter-spacing:-0.5px;">18:00</div>
<div class="t bl c n" style="left:133px;top:189px;width:35px;height:17px;line-height:17px;">30</div>
<div class="t bl c n" style="left:168px;top:189px;width:35px;height:17px;line-height:17px;">30</div>
<div class="t bl c n" style="left:203px;top:189px;width:35px;height:17px;line-height:17px;">30</div>
<div class="t bl c n" style="left:238px;top:189px;width:35px;height:17px;line-height:17px;">30</div>
<div class="t bl c n" style="left:343px;top:189px;width:35px;height:17px;line-height:17px;">30</div>
<div class="t bl c n" style="left:413px;top:189px;width:35px;height:17px;line-height:17px;">30</div>
<div class="t bl c n" style="left:483px;top:189px;width:35px;height:17px;line-height:17px;">30</div>
<div class="t bl c n" style="left:623px;top:189px;width:35px;height:17px;line-height:17px;">30</div>
<div class="t bl c n" style="left:728px;top:189px;width:35px;height:17px;line-height:17px;">30</div>
<div class="t bl c n" style="left:763px;top:189px;width:35px;height:17px;line-height:17px;">30</div>
<div class="t bl" style="left:7px;top:206px;width:50px;height:17px;line-height:17px;letter-spacing:-0.5px;">19:00</div>
<div class="t bl c n" style="left:63px;top:206px;width:35px;height:17px;line-height:17px;">40</div>
<div class="t bl c n" style="left:343px;top:206px;width:35px;height:17px;line-height:17px;">40</div>
<div class="t bl c n" style="left:413px;top:206px;width:35px;height:17px;line-height:17px;">20</div>
<div class="t bl c n" style="left:448px;top:206px;width:35px;height:17px;line-height:17px;">20</div>
<div class="t bl c n" style="left:483px;top:206px;width:35px;height:17px;line-height:17px;">40</div>
<div class="t bl c n" style="left:553px;top:206px;width:35px;height:17px;line-height:17px;">40</div>
<div class="t bl c n" style="left:623px;top:206px;width:35px;height:17px;line-height:17px;">20</div>
<div class="t bl" style="left:7px;top:223px;width:50px;height:17px;line-height:17px;letter-spacing:-0.5px;">20:00</div>
<div class="t bl c n" style="left:168px;top:223px;width:35px;height:17px;line-height:17px;">20</div>
<div class="t bl c n" style="left:238px;top:223px;width:35px;height:17px;line-height:17px;">20</div>
<div class="t bl c n" style="left:378px;top:223px;width:35px;height:17px;line-height:17px;">20</div>
<div class="t bl" style="left:7px;top:240px;width:50px;height:17px;line-height:17px;letter-spacing:-0.5px;">21:00</div>
<div class="t bl c n" style="left:98px;top:240px;width:35px;height:17px;line-height:17px;">20</div>
<div class="t bl c n" style="left:133px;top:240px;width:35px;height:17px;line-height:17px;">20</div>
<div class="t bl c n" style="left:518px;top:240px;width:35px;height:17px;line-height:17px;">20</div>
<div class="t bl c n" style="left:588px;top:240px;width:35px;height:17px;line-height:17px;">20</div>
<div class="t bl c n" style="left:693px;top:240px;width:35px;height:17px;line-height:17px;">20</div>
<div class="t bl c n" style="left:728px;top:240px;width:35px;height:17px;line-height:17px;">20</div>
<div class="t bl" style="left:7px;top:257px;width:50px;height:17px;line-height:17px;letter-spacing:-0.5px;">22:00</div>
<div class="t bl c n" style="left:203px;top:257px;width:35px;height:17px;line-height:17px;">20</div>
<div class="t bl c n" style="left:273px;top:257px;width:35px;height:17px;line-height:17px;">20</div>
<div class="t bl c n" style="left:308px;top:257px;width:35px;height:17px;line-height:17px;">20</div>
<div class="t bl c n" style="left:658px;top:257px;width:35px;height:17px;line-height:17px;">20</div>
<div class="t bl c n" style="left:728px;top:257px;width:35px;height:17px;line-height:17px;">20</div>
<div class="t bl c n" style="left:763px;top:257px;width:35px;height:17px;line-height:17px;">20</div>
<div class="t bl" style="left:7px;top:274px;width:50px;height:17px;line-height:17px;letter-spacing:-0.5px;">23:00</div>
<div class="t bl" style="left:7px;top:291px;width:50px;height:17px;line-height:17px;letter-spacing:-0.5px;">00:00</div>
<div class="t bl" style="left:7px;top:308px;width:50px;height:17px;line-height:17px;letter-spacing:-0.5px;">01:00</div>
<div class="t bl" style="left:7px;top:325px;width:50px;height:17px;line-height:17px;letter-spacing:-0.5px;">02:00</div>
</div>
<div class="strackv" style="left:800px;top:335px;width:20px;height:351px;"></div>
<div class="sbtnv" style="left:800px;top:335px;width:19px;height:20px;"></div>
<svg style="left:0;top:0" width="1" height="1"><path d="M805.5 347.5L809.5 343.5L813.5 347.5" fill="none" stroke="#4D6185" stroke-width="2.2"/></svg>
<div class="sbtnv" style="left:800px;top:665px;width:19px;height:20px;"></div>
<svg style="left:0;top:0" width="1" height="1"><path d="M805.5 673.5L809.5 677.5L813.5 673.5" fill="none" stroke="#4D6185" stroke-width="2.2"/></svg>
<div class="sthumbv" style="left:800px;top:369px;width:19px;height:232px;"></div>
<div style="left:806px;top:481px;width:7px;height:1px;background:#EEF4FE;"></div>
<div style="left:807px;top:482px;width:7px;height:1px;background:#8CB0F8;"></div>
<div style="left:806px;top:483px;width:7px;height:1px;background:#EEF4FE;"></div>
<div style="left:807px;top:484px;width:7px;height:1px;background:#8CB0F8;"></div>
<div style="left:806px;top:485px;width:7px;height:1px;background:#EEF4FE;"></div>
<div style="left:807px;top:486px;width:7px;height:1px;background:#8CB0F8;"></div>
<div style="left:806px;top:487px;width:7px;height:1px;background:#EEF4FE;"></div>
<div style="left:807px;top:488px;width:7px;height:1px;background:#8CB0F8;"></div>
<div class="strackh" style="left:3px;top:686px;width:797px;height:20px;"></div>
<div class="sbtn" style="left:4px;top:686px;width:20px;height:19px;"></div>
<svg style="left:0;top:0" width="1" height="1"><path d="M16.5 691.5L12.5 695.5L16.5 699.5" fill="none" stroke="#4D6185" stroke-width="2.2"/></svg>
<div class="sbtn" style="left:778px;top:686px;width:20px;height:19px;"></div>
<svg style="left:0;top:0" width="1" height="1"><path d="M786.5 691.5L790.5 695.5L786.5 699.5" fill="none" stroke="#4D6185" stroke-width="2.2"/></svg>
<div class="sthumbh" style="left:25px;top:686px;width:496px;height:19px;"></div>
<div style="left:268px;top:692px;width:1px;height:7px;background:#EEF4FE;"></div>
<div style="left:269px;top:693px;width:1px;height:7px;background:#8CB0F8;"></div>
<div style="left:270px;top:692px;width:1px;height:7px;background:#EEF4FE;"></div>
<div style="left:271px;top:693px;width:1px;height:7px;background:#8CB0F8;"></div>
<div style="left:272px;top:692px;width:1px;height:7px;background:#EEF4FE;"></div>
<div style="left:273px;top:693px;width:1px;height:7px;background:#8CB0F8;"></div>
<div style="left:274px;top:692px;width:1px;height:7px;background:#EEF4FE;"></div>
<div style="left:275px;top:693px;width:1px;height:7px;background:#8CB0F8;"></div>
<div style="left:800px;top:686px;width:20px;height:20px;background:#ECE9D8;"></div>
<div style="left:823px;top:304px;width:2px;height:405px;background:#fff;"></div>
<div style="left:825px;top:304px;width:198px;height:405px;background:#EDE8DA;border:1px solid #000;"></div>
<div style="left:826px;top:305px;width:196px;height:28px;background:#ECE9D8;"></div>
<div style="left:826px;top:305px;width:196px;height:2px;background:#fff;"></div>
<div style="left:826px;top:305px;width:1px;height:50px;background:#fff;"></div>
<div class="t c" style="left:828px;top:308px;width:196px;height:26px;line-height:26px;color:#C00000;font-size:16.67px;-webkit-text-stroke:0.55px #C00000;letter-spacing:0.39px;">MEDIAPLAN</div>
<div style="left:826px;top:333px;width:196px;height:1px;background:#ACA899;"></div>
<div style="left:826px;top:334px;width:196px;height:1px;background:#716F64;"></div>
<div class="hf" style="left:826px;top:335px;width:79px;height:19px;line-height:19px;">Info</div>
<div class="hf" style="left:905px;top:335px;width:75px;height:19px;line-height:19px;">Val.</div>
<div class="hf" style="left:980px;top:335px;width:42px;height:19px;line-height:19px;">%</div>
<div style="left:826px;top:354px;width:196px;height:1px;background:#fff;"></div>
<div class="t r" style="left:826px;top:372px;width:79px;height:16px;line-height:16px;">Plan:</div>
<div class="t bl c" style="left:905px;top:372px;width:78px;height:16px;line-height:16px;">32</div>
<div class="t bl c" style="left:983px;top:372px;width:42px;height:16px;line-height:16px;">100</div>
<div class="t r" style="left:826px;top:388px;width:79px;height:16px;line-height:16px;">Including Fix:</div>
<div class="t bl c" style="left:905px;top:388px;width:78px;height:16px;line-height:16px;">8</div>
<div class="t bl c" style="left:983px;top:388px;width:42px;height:16px;line-height:16px;">25</div>
<div class="t r" style="left:826px;top:404px;width:79px;height:16px;line-height:16px;">Float:</div>
<div class="t bl c" style="left:905px;top:404px;width:78px;height:16px;line-height:16px;">16</div>
<div class="t bl c" style="left:983px;top:404px;width:42px;height:16px;line-height:16px;">50</div>
<div class="t r" style="left:826px;top:420px;width:79px;height:16px;line-height:16px;">Npr:</div>
<div class="t bl c" style="left:905px;top:420px;width:78px;height:16px;line-height:16px;">8</div>
<div class="t bl c" style="left:983px;top:420px;width:42px;height:16px;line-height:16px;">25</div>
<div class="t r" style="left:826px;top:452px;width:79px;height:16px;line-height:16px;">Volume:</div>
<div class="t bl c" style="left:905px;top:452px;width:78px;height:16px;line-height:16px;">32</div>
<div class="t bl c" style="left:983px;top:452px;width:42px;height:16px;line-height:16px;">99.99</div>
<div class="t r" style="left:826px;top:468px;width:79px;height:16px;line-height:16px;">Including Fix:</div>
<div class="t bl c" style="left:905px;top:468px;width:78px;height:16px;line-height:16px;">8.02</div>
<div class="t bl c" style="left:983px;top:468px;width:42px;height:16px;line-height:16px;">25.06</div>
<div class="t r" style="left:826px;top:484px;width:79px;height:16px;line-height:16px;">Float:</div>
<div class="t bl c" style="left:905px;top:484px;width:78px;height:16px;line-height:16px;">15.98</div>
<div class="t bl c" style="left:983px;top:484px;width:42px;height:16px;line-height:16px;">49.95</div>
<div class="t r" style="left:826px;top:500px;width:79px;height:16px;line-height:16px;">Npr:</div>
<div class="t bl c" style="left:905px;top:500px;width:78px;height:16px;line-height:16px;">7.99</div>
<div class="t bl c" style="left:983px;top:500px;width:42px;height:16px;line-height:16px;">24.98</div>
<div class="t r" style="left:826px;top:532px;width:79px;height:16px;line-height:16px;">Cost:</div>
<div class="t bl c" style="left:905px;top:532px;width:78px;height:16px;line-height:16px;">891.05</div>
<div class="t bl c" style="left:983px;top:532px;width:42px;height:16px;line-height:16px;">100</div>
<div class="t r" style="left:826px;top:548px;width:79px;height:16px;line-height:16px;">Including Fix:</div>
<div class="t bl c" style="left:905px;top:548px;width:78px;height:16px;line-height:16px;">314.6</div>
<div class="t bl c" style="left:983px;top:548px;width:42px;height:16px;line-height:16px;">35.31</div>
<div class="t r" style="left:826px;top:564px;width:79px;height:16px;line-height:16px;">Float:</div>
<div class="t bl c" style="left:905px;top:564px;width:78px;height:16px;line-height:16px;">437.87</div>
<div class="t bl c" style="left:983px;top:564px;width:42px;height:16px;line-height:16px;">49.14</div>
<div class="t r" style="left:826px;top:580px;width:79px;height:16px;line-height:16px;">Npr:</div>
<div class="t bl c" style="left:905px;top:580px;width:78px;height:16px;line-height:16px;">138.58</div>
<div class="t bl c" style="left:983px;top:580px;width:42px;height:16px;line-height:16px;">15.55</div>
<div style="left:0px;top:709px;width:1024px;height:1px;background:#fff;"></div>
<div class="sunk" style="left:0px;top:712px;width:256px;height:22px;"></div>
<div class="t" style="left:2px;top:713px;width:252px;height:20px;line-height:20px;font-size:13.5px;letter-spacing:0.31px;">Server: Test</div>
<div class="sunk" style="left:258px;top:712px;width:256px;height:22px;"></div>
<div class="t" style="left:263px;top:713px;width:252px;height:20px;line-height:20px;font-size:13.5px;letter-spacing:-0.13px;">Client: Media Systems</div>
<div class="sunk" style="left:516px;top:712px;width:303px;height:22px;"></div>
<div class="t" style="left:519px;top:713px;width:299px;height:20px;line-height:20px;font-size:13.5px;letter-spacing:-0.04px;">User: Zhemionis Alex</div>
<div class="sunk" style="left:821px;top:712px;width:203px;height:22px;"></div>
<div class="t" style="left:826px;top:713px;width:199px;height:20px;line-height:20px;font-size:13.5px;letter-spacing:0.6px;">Entry time: 10:02:15</div>
</div></body></html>
